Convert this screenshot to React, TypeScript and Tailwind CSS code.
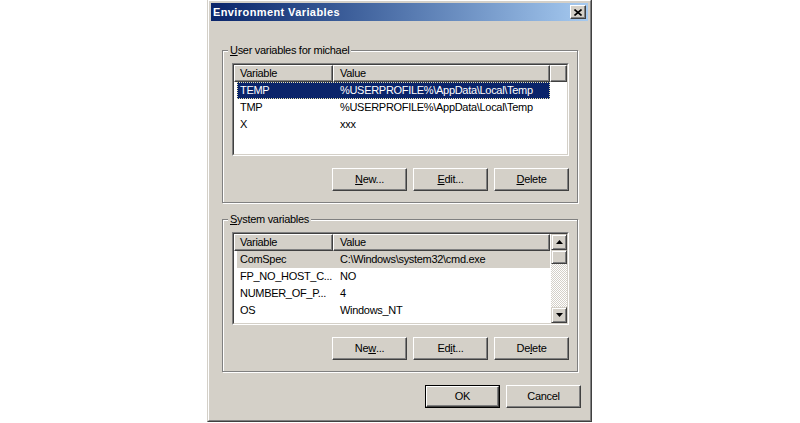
import React from 'react';

type Row = { name: string; value: string };

const userRows: Row[] = [
  { name: 'TEMP', value: '%USERPROFILE%\\AppData\\Local\\Temp' },
  { name: 'TMP', value: '%USERPROFILE%\\AppData\\Local\\Temp' },
  { name: 'X', value: 'xxx' },
];

const systemRows: Row[] = [
  { name: 'ComSpec', value: 'C:\\Windows\\system32\\cmd.exe' },
  { name: 'FP_NO_HOST_C...', value: 'NO' },
  { name: 'NUMBER_OF_P...', value: '4' },
  { name: 'OS', value: 'Windows_NT' },
  { name: 'Path', value: 'C:\\Windows\\system32;C:\\Windows;C:\\Windows\\System32\\Wbem' },
];

function Btn({ children, isDefault = false }: { children: React.ReactNode; isDefault?: boolean }) {
  const inner =
    'flex items-center justify-center bg-[#d4d0c8] border border-t-white border-l-white border-r-[#404040] border-b-[#404040] shadow-[inset_-1px_-1px_0_#808080]';
  if (isDefault) {
    return (
      <div className="w-[75px] h-[23px] border border-black flex">
        <div className={`${inner} flex-1`}>{children}</div>
      </div>
    );
  }
  return <div className={`${inner} w-[75px] h-[23px]`}>{children}</div>;
}

function Arrow({ up }: { up: boolean }) {
  return (
    <div className="w-[16px] h-[16px] flex items-center justify-center bg-[#d4d0c8] border border-t-[#d4d0c8] border-l-[#d4d0c8] border-r-[#404040] border-b-[#404040] shadow-[inset_1px_1px_0_#fff,inset_-1px_-1px_0_#808080]">
      <svg width="7" height="4" viewBox="0 0 7 4">
        {up ? <path d="M3.5 0 L7 4 L0 4 Z" fill="#000" /> : <path d="M0 0 L7 0 L3.5 4 Z" fill="#000" />}
      </svg>
    </div>
  );
}

function ListView({
  rows,
  selected,
  active,
  scroll,
}: {
  rows: Row[];
  selected: number;
  active: boolean;
  scroll: boolean;
}) {
  const head =
    'h-[17px] flex items-center bg-[#d4d0c8] border border-t-white border-l-white border-r-[#404040] border-b-[#404040] shadow-[inset_-1px_-1px_0_#808080]';
  return (
    <div className="w-[337px] h-[93px] border border-t-[#808080] border-l-[#808080] border-r-white border-b-white">
      <div className="h-full border border-t-[#404040] border-l-[#404040] border-r-[#d4d0c8] border-b-[#d4d0c8] bg-white flex overflow-hidden">
        <div className="flex-1 flex flex-col min-w-0">
          <div className="flex shrink-0">
            <div className={`${head} w-[99px] pl-[5px]`}>Variable</div>
            <div className={`${head} w-[217px] pl-[6px]`}>Value</div>
            {!scroll && <div className={`${head} flex-1`} />}
          </div>
          {rows.map((r, i) => {
            const sel = i === selected;
            const tone = sel
              ? active
                ? 'bg-[#0a246a] text-white outline-1 outline-dotted outline-[#e8e2b0] -outline-offset-1'
                : 'bg-[#d4d0c8]'
              : '';
            return (
              <div key={r.name} className={`ml-[3px] w-[313px] h-[17px] shrink-0 flex items-center whitespace-nowrap ${tone}`}>
                <div className="w-[95px] pl-[3px] overflow-hidden">{r.name}</div>
                <div className="flex-1 pl-[8px] overflow-hidden">{r.value}</div>
              </div>
            );
          })}
        </div>
        {scroll && (
          <div className="w-[16px] flex flex-col shrink-0">
            <Arrow up />
            <div className="h-[14px] bg-[#d4d0c8] border border-t-[#d4d0c8] border-l-[#d4d0c8] border-r-[#404040] border-b-[#404040] shadow-[inset_1px_1px_0_#fff,inset_-1px_-1px_0_#808080]" />
            <div className="flex-1 [background:repeating-conic-gradient(#d4d0c8_0%_25%,#ffffff_0%_50%)_0_0/2px_2px]" />
            <Arrow up={false} />
          </div>
        )}
      </div>
    </div>
  );
}

function Group({ label, children, className = '' }: { label: React.ReactNode; children: React.ReactNode; className?: string }) {
  return (
    <div
      className={`relative ml-[11px] w-[356px] border border-[#808080] shadow-[inset_1px_1px_0_#fff,1px_1px_0_#fff] pl-[9px] pt-[12px] pb-[11px] ${className}`}
    >
      <span className="absolute -top-[7px] left-[5px] px-[2px] leading-[13px] bg-[#d4d0c8]">{label}</span>
      {children}
    </div>
  );
}

export default function App() {
  return (
    <div className="w-[800px] h-[423px] bg-white overflow-hidden text-[11px] leading-[13px] tracking-[-0.3px] text-black font-['Liberation_Sans',Arial,sans-serif]">
      <div className="ml-[207px] -mt-px w-[385px] h-[423px] border border-t-[#d4d0c8] border-l-[#d4d0c8] border-r-[#404040] border-b-[#404040]">
        <div className="h-full border border-t-white border-l-white border-r-[#808080] border-b-[#808080] bg-[#d4d0c8] p-[2px] flex flex-col">
          {/* title bar */}
          <div className="h-[18px] shrink-0 flex items-center justify-between bg-linear-to-r from-[#0a246a] to-[#a6caf0] pl-[2px] pr-[2px]">
            <span className="text-white font-bold tracking-[0.4px]">Environment Variables</span>
            <div className="w-[16px] h-[14px] flex items-center justify-center bg-[#d4d0c8] border border-t-white border-l-white border-r-[#404040] border-b-[#404040] shadow-[inset_-1px_-1px_0_#808080]">
              <svg width="8" height="7" viewBox="0 0 8 7">
                <path d="M0.5 0.5 L7.5 6.5 M7.5 0.5 L0.5 6.5" stroke="#000" strokeWidth="1.6" />
              </svg>
            </div>
          </div>

          <Group label={<><u>U</u>ser variables for michael</>} className="mt-[29px]">
            <ListView rows={userRows} selected={0} active scroll={false} />
            <div className="w-[337px] mt-[12px] flex justify-end gap-[6px]">
              <Btn><u>N</u>ew...</Btn>
              <Btn><u>E</u>dit...</Btn>
              <Btn><u>D</u>elete</Btn>
            </div>
          </Group>

          <Group label={<><u>S</u>ystem variables</>} className="mt-[16px]">
            <ListView rows={systemRows} selected={0} active={false} scroll />
            <div className="w-[337px] mt-[12px] flex justify-end gap-[6px]">
              <Btn>Ne<u>w</u>...</Btn>
              <Btn>Ed<u>i</u>t...</Btn>
              <Btn>De<u>l</u>ete</Btn>
            </div>
          </Group>

          <div className="mt-[13px] pr-[7px] flex justify-end gap-[6px]">
            <Btn isDefault>OK</Btn>
            <Btn>Cancel</Btn>
          </div>
        </div>
      </div>
    </div>
  );
}
